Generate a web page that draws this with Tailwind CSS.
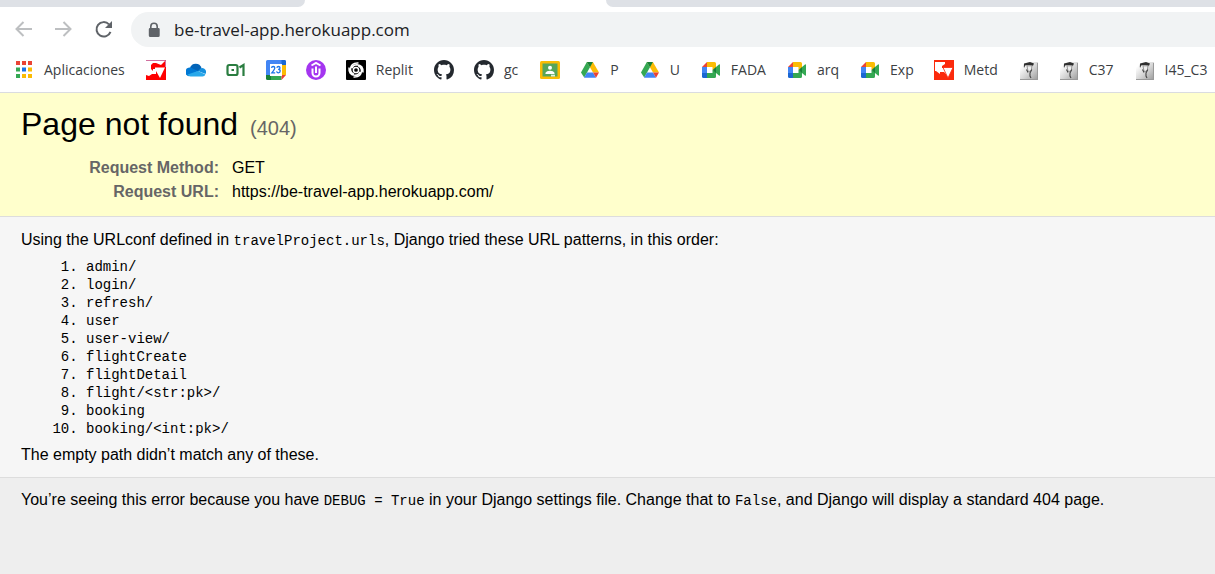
<!DOCTYPE html>
<html lang="en">
<head>
<meta charset="utf-8">
<meta name="viewport" content="width=device-width, initial-scale=1">
<title>Page not found</title>
<script src="https://cdn.jsdelivr.net/npm/@tailwindcss/browser@4"></script>
</head>
<body class="flex min-h-screen flex-col bg-[#eeeeee] font-['Liberation_Sans',sans-serif] text-base text-black">

<svg class="absolute size-0" aria-hidden="true">
  <symbol id="github" viewBox="0 0 16 16"><path fill="#24292f" d="M8 0C3.58 0 0 3.58 0 8c0 3.54 2.29 6.53 5.47 7.59.4.07.55-.17.55-.38 0-.19-.01-.82-.01-1.49-2.01.37-2.53-.49-2.69-.94-.09-.23-.48-.94-.82-1.13-.28-.15-.68-.52-.01-.53.63-.01 1.08.58 1.23.82.72 1.21 1.87.87 2.33.66.07-.52.28-.87.51-1.07-1.78-.2-3.64-.89-3.64-3.95 0-.87.31-1.59.82-2.15-.08-.2-.36-1.02.08-2.12 0 0 .67-.21 2.2.82.64-.18 1.32-.27 2-.27s1.36.09 2 .27c1.53-1.04 2.2-.82 2.2-.82.44 1.1.16 1.92.08 2.12.51.56.82 1.27.82 2.15 0 3.07-1.87 3.75-3.65 3.95.29.25.54.73.54 1.48 0 1.07-.01 1.93-.01 2.2 0 .21.15.46.55.38A8.01 8.01 0 0 0 16 8c0-4.42-3.58-8-8-8z"/></symbol>
  <symbol id="drive" viewBox="0 0 20 20"><path fill="#fbbc04" d="M6.900 2h6L19 12.500h-6z"/><path fill="#34a853" d="M6.900 2 10 7.300 4.200 17.500 1 12.500z"/><path fill="#188038" d="M6.900 2h6L10 7.300z"/><path fill="#4285f4" d="M7 12.500h6l3 5.300H4z"/><path fill="#ea4335" d="M13 12.500h6l-3 5.300z"/></symbol>
  <symbol id="meet" viewBox="0 0 20 20"><path fill="#fff" d="M5 6h8v8H5z"/><path fill="#ea4335" d="M1 7l5-5v5z"/><path fill="#4285f4" d="M1 7h5v6H1z"/><path fill="#1a66d2" d="M1 13h5v5H2.500A1.500 1.500 0 0 1 1 16.500z"/><path fill="#fbbc04" d="M6 2h7.500A1.500 1.500 0 0 1 15 3.500V8l-3.500 2V7H6z"/><path fill="#34a853" d="M6 13h5.500v-3L15 12v4.500a1.500 1.500 0 0 1-1.500 1.500H6z"/><path fill="#188038" d="M11.500 10 15 7v6z"/><path fill="#34a853" d="m15 7 3-2.500q1-.6 1 .5v10q0 1.100-1 .5L15 13z"/></symbol>
  <symbol id="grad" viewBox="0 0 20 20"><defs><linearGradient id="silver" x1="0" y1="0" x2="1" y2="1"><stop offset="0.150" stop-color="#ffffff"/><stop offset="0.550" stop-color="#d4d4d4"/><stop offset="1" stop-color="#999999"/></linearGradient></defs><path fill="url(#silver)" d="M1 2h18v18H1z"/><path stroke="#9a9a9a" fill="none" d="M18.500 3v16.500H1"/><path fill="#303030" d="m5 3.500 6-1.500 4 1.500-1 2.200-4-.7-4 .5-.5 2-.7-.3z"/><path fill="#efefef" stroke="#777" stroke-width=".7" d="M8 5.800h5l-.7 4-1.300 1.500H9z"/><path stroke="#444" stroke-width="1.100" fill="none" d="m7.500 9.500 1.500 3m3.800-3L11 13v3l1 2"/></symbol>
</svg>

<header class="bg-white">
  <div class="flex h-[7px]">
    <div class="w-[305px] rounded-br-[8px] bg-[#dee1e6]"></div>
    <div class="w-[301px]"></div>
    <div class="grow rounded-bl-[8px] bg-[#dee1e6]"></div>
  </div>

  <div class="flex items-center pt-[5px]">
    <nav class="flex w-[131px] items-center gap-5 pl-[14px]" aria-label="History">
      <button type="button" aria-label="Back"><svg class="size-5" viewBox="0 0 20 20" fill="none" stroke="#bdbfc1" stroke-width="2"><path d="M18 9H3M9.500 2 2.500 9l7 7"/></svg></button>
      <button type="button" aria-label="Forward"><svg class="size-5" viewBox="0 0 20 20" fill="none" stroke="#bdbfc1" stroke-width="2"><path d="M1 9h15M9.500 2l7 7-7 7"/></svg></button>
      <button type="button" aria-label="Reload"><svg class="size-5" viewBox="0 0 20 20"><path d="M16.500 11.800A7.200 7.200 0 1 1 15 4.400" fill="none" stroke="#5f6368" stroke-width="2"/><path d="M18 1v7h-7z" fill="#5f6368"/></svg></button>
    </nav>
    <label class="flex h-[35px] grow items-center rounded-l-full bg-[#f1f3f4] pl-[15px]">
      <svg class="mr-[12px] h-4 w-4" viewBox="0 0 16 16" aria-hidden="true"><path fill="#5f6368" fill-rule="evenodd" d="M4 6V4.500a4 4 0 0 1 8 0V6h.5A1.200 1.200 0 0 1 13.700 7v6.500a1.500 1.500 0 0 1-1.500 1.500H4.300a1.500 1.500 0 0 1-1.500-1.500V7.200A1.200 1.200 0 0 1 4 6zm1.600 0h4.800V4.500a2.400 2.400 0 0 0-4.800 0z"/></svg>
      <input type="text" aria-label="Address" value="be-travel-app.herokuapp.com" class="min-w-0 grow bg-transparent font-['Open_Sans',sans-serif] text-[17px] text-[#202124] outline-none">
    </label>
  </div>

  <nav class="flex h-[46px] items-center gap-5 overflow-hidden border-b border-[#dadce0] pl-[14px] font-['Open_Sans',sans-serif] text-[14px] whitespace-nowrap text-[#3c4043] [&_svg]:size-5 [&_svg]:shrink-0 [&>a]:flex [&>a]:shrink-0 [&>a]:items-center [&>a]:gap-[10px]" aria-label="Bookmarks">
    <a href="#" class="pr-px"><svg viewBox="0 0 20 20"><path fill="#ea4335" d="M2 1h4v4H2zm6 0h4v4H8zm6 0h4v4h-4z"/><path fill="#34a853" d="M2 7.500h4v4H2zM2 14h4v4H2z"/><path fill="#1a73e8" d="M8 7.500h4v4H8z"/><path fill="#fbbc04" d="M14 7.500h4v4h-4zM8 14h4v4H8zm6 0h4v4h-4z"/></svg>Aplicaciones</a>
    <a href="#" aria-label="G"><svg viewBox="0 0 20 20"><path fill="#f00" d="M0 0h20v20H0z"/><path fill="#fff" d="M0 1h10v2H7L5 5v4l2 2h3v3H6l-3 2-3-1z"/><path fill="#fff" d="M10 1h9L15 5l-5-2z"/><path fill="#fff" d="M9 7.500h10L14 18 10 11H7V9h2z"/><path stroke="#d0709f" fill="none" d="M0 .5h19.500V7"/></svg></a>
    <a href="#" aria-label="OneDrive"><svg viewBox="0 0 20 20"><path fill="#0364b8" d="M4 8a6 6 0 0 1 11.500 0L12 12z"/><path fill="#0078d4" d="M4.500 7.500 12 11l-9 5.300A4.400 4.400 0 0 1 4.500 7.500z"/><path fill="#1490df" d="M15.500 8a4 4 0 0 1 4 6L12 11z"/><path fill="#28a8ea" d="m12 11 7.500 3.500A4 4 0 0 1 16.500 16.500H4.500A4 4 0 0 1 1.500 14.500z"/></svg></a>
    <a href="#" aria-label="01"><svg viewBox="0 0 20 20" fill="none" stroke="#2a7d40" stroke-width="2.200"><rect x="1.500" y="5" width="10" height="10" rx="1.800"/><path d="m13.500 7.500 4-2.500V16M5.500 10h2.500"/></svg></a>
    <a href="#" aria-label="Calendar"><svg viewBox="0 0 20 20"><path fill="#4285f4" d="M1.500 0h17A1.500 1.500 0 0 1 20 1.500V15H0V1.500A1.500 1.500 0 0 1 1.500 0z"/><path fill="#fbbc04" d="M15.500 5H20v10h-4.500z"/><path fill="#1967d2" d="M15.500 0h3A1.500 1.500 0 0 1 20 1.500V5h-4.500z"/><path fill="#34a853" d="M5 15h10.500v5H5z"/><path fill="#188038" d="M0 15h5v5H1.500A1.500 1.500 0 0 1 0 18.500z"/><path fill="#ea4335" d="M15.500 15H20l-4.500 5z"/><path fill="#fff" d="M4 4h12v12H4z"/><path fill="none" stroke="#1a73e8" stroke-width="1.300" d="M5.500 7.800q.2-1.300 1.700-1.300 1.600 0 1.600 1.400 0 1.200-3 4.900H9.200M10.800 7.700q.4-1.200 1.600-1.200 1.600 0 1.600 1.500 0 1.400-1.900 1.400 2.100 0 2.100 1.700 0 1.700-1.800 1.700-1.400 0-1.800-1.400"/></svg></a>
    <a href="#" aria-label="Udemy"><svg viewBox="0 0 20 20"><circle cx="10" cy="10" r="10" fill="#a435f0"/><path fill="none" stroke="#fff" stroke-width="2" d="m5.500 5.500 4.500-2.500 4.500 2.500M6.500 8.500V13a3.500 3.500 0 0 0 7 0V8.500M10 6.500V13"/></svg></a>
    <a href="#" class="pr-px"><svg viewBox="0 0 20 20"><rect width="20" height="20" rx="1" fill="#000"/><g fill="none" stroke="#fff" stroke-width="1.500"><circle cx="10" cy="10" r="2.600"/><path d="M12.500 3Q5 2.500 4.500 9q0 4 3.500 5.200M17 12.500Q17.500 5 11 4.700q-4 0-5 3.600M7.500 17q7.500.5 8-6 0-4-3.500-5.200M3 7.500Q2.500 15 9 15.300q4 0 5-3.600"/></g></svg>Replit</a>
    <a href="#" aria-label="GitHub"><svg><use href="#github"/></svg></a>
    <a href="#" class="pr-px"><svg><use href="#github"/></svg>gc</a>
    <a href="#" aria-label="Classroom" class="pl-px"><svg viewBox="0 0 20 20"><rect y="1" width="20" height="18" rx="1.500" fill="#fbbc04"/><path fill="#57a55a" d="M2.500 3.500h15v13h-15z"/><circle cx="10" cy="7.800" r="2" fill="#fff"/><path fill="#fff" d="M5.500 14v-1.300q1-2 4.500-2t4.500 2V14z"/><path fill="#dff1df" d="M11 14.700h4v1.800h-4z"/></svg></a>
    <a href="#" class="pr-px"><svg><use href="#drive"/></svg>P</a>
    <a href="#" class="pr-px"><svg><use href="#drive"/></svg>U</a>
    <a href="#" class="pr-px"><svg><use href="#meet"/></svg>FADA</a>
    <a href="#" class="pr-px"><svg><use href="#meet"/></svg>arq</a>
    <a href="#"><svg><use href="#meet"/></svg>Exp</a>
    <a href="#" class="pr-px"><svg viewBox="0 0 20 20"><path fill="#fb2a0c" d="M0 0h20v20H0z"/><path fill="#fff" d="M1 2h10v2L8 6v2h1l4 6v1l-3-3H6v2L2 11H1z"/><path fill="#fff" stroke="#fb2a0c" stroke-width=".8" d="M9 7.500h10L14 18z"/></svg>Metd</a>
    <a href="#" aria-label="Campus"><svg><use href="#grad"/></svg></a>
    <a href="#" class="pr-px"><svg><use href="#grad"/></svg>C37</a>
    <a href="#"><svg><use href="#grad"/></svg>I45_C3</a>
  </nav>
</header>

<section class="border-b border-[#dddddd] bg-[#ffffcc] px-[21px] pt-[10px] pb-3">
  <h1 class="mb-[7px] text-[32px] leading-[42px]">Page not found <small class="ml-[3px] text-[20px] text-[#666666]">(404)</small></h1>
  <table class="leading-6">
    <tbody>
      <tr><th scope="row" class="w-[198px] p-0 text-right font-bold text-[#666666]">Request Method:</th><td class="pl-[13px]">GET</td></tr>
      <tr><th scope="row" class="w-[198px] p-0 text-right font-bold text-[#666666]">Request URL:</th><td class="pl-[13px]">https://be-travel-app.herokuapp.com/</td></tr>
    </tbody>
  </table>
</section>

<main class="border-b border-[#dddddd] bg-[#f6f6f6] px-[21px] pt-[13px] pb-3">
  <p class="leading-5">Using the URLconf defined in <code class="font-['Liberation_Mono',monospace] text-[14px] leading-none">travelProject.urls</code>, Django tried these URL patterns, in this order:</p>
  <ol class="mt-2 mb-[7px] list-decimal pl-[65px] font-['Liberation_Mono',monospace] text-[14px] leading-[18px]">
    <li>admin/</li>
    <li>login/</li>
    <li>refresh/</li>
    <li>user</li>
    <li>user-view/</li>
    <li>flightCreate</li>
    <li>flightDetail</li>
    <li>flight/&lt;str:pk&gt;/</li>
    <li>booking</li>
    <li>booking/&lt;int:pk&gt;/</li>
  </ol>
  <p class="leading-5">The empty path didn’t match any of these.</p>
</main>

<footer class="px-[21px] py-3">
  <p class="leading-5">You’re seeing this error because you have <code class="font-['Liberation_Mono',monospace] text-[14px] leading-none">DEBUG = True</code> in your Django settings file. Change that to <code class="font-['Liberation_Mono',monospace] text-[14px] leading-none">False</code>, and Django will display a standard 404 page.</p>
</footer>
</body>
</html>
